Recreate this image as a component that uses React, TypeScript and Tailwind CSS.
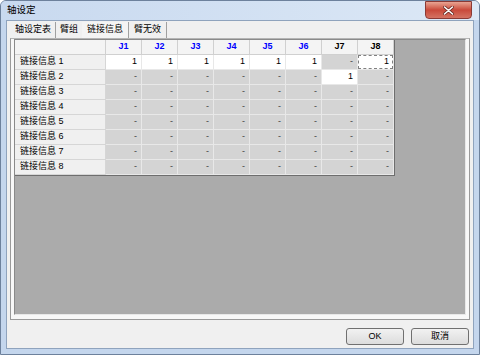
import React from "react";

const cols = ["J1", "J2", "J3", "J4", "J5", "J6", "J7", "J8"];

function cellVal(r: number, c: number): { v: string; white: boolean; focus?: boolean } {
  if (r === 0 && c < 6) return { v: "1", white: true };
  if (r === 0 && c === 7) return { v: "1", white: true, focus: true };
  if (r === 1 && c === 6) return { v: "1", white: true };
  return { v: "-", white: false };
}

export default function App() {
  const font = { fontFamily: "'Liberation Sans', 'Noto Sans CJK SC', sans-serif" };
  return (
    <div
      className="w-[480px] h-[355px] relative bg-[#c4d6ed] border border-[#6d819c] rounded-t-[6px] overflow-hidden flex flex-col text-[9px] text-black"
      style={font}
    >
      {/* title bar */}
      <div className="h-[19px] flex items-center pl-[6px] bg-gradient-to-r from-[#c8d9ef] to-[#dce8f6] text-[9.5px]">
        轴设定
      </div>
      <div className="absolute right-[7px] top-0 w-[47px] h-[18px] rounded-b-[4px] border border-[#8b3a35] bg-gradient-to-b from-[#e8a493] via-[#c9493a] to-[#d47262] flex items-center justify-center">
        <svg width="11" height="9" viewBox="0 0 11 9">
          <path d="M1.5 1 L9.5 8 M9.5 1 L1.5 8" stroke="#6b2a24" strokeWidth="3" strokeLinecap="round" />
          <path d="M1.5 1 L9.5 8 M9.5 1 L1.5 8" stroke="#ffffff" strokeWidth="1.6" strokeLinecap="round" />
        </svg>
      </div>

      {/* client */}
      <div className="mx-[5px] h-[329px] border border-[#8fa3bd] bg-[#f0f0f0] flex flex-col">
        {/* tabs */}
        <div className="h-[16px] mt-[1px] pl-[4px] flex items-stretch">
          <div className="px-[4px] flex items-center border-r border-[#a0a0a0]">轴设定表</div>
          <div className="px-[4px] flex items-center">臂组</div>
          <div className="px-[5px] flex items-center bg-[#f4f4f4] border-r border-[#a0a0a0]">链接信息</div>
          <div className="px-[5px] flex items-center border-r border-[#a0a0a0]">臂无效</div>
        </div>
        {/* panel */}
        <div className="mx-[3px] h-[282px] border border-[#9a9a9a] border-t-[#b4b4b4] bg-[#f8f8f8] px-[3px] pt-0 pb-[4px]">
          <div className="w-full h-full border border-[#8a8a8a] border-r-[#e8e8e8] border-b-[#e8e8e8] bg-[#ababab] flex flex-col items-start">
            <div className="flex flex-col border-r border-b border-[#6e6e6e]">
              {/* header */}
              <div className="flex h-[15px]">
                <div className="w-[91px] border-r border-b border-[#d0d0d0] bg-[#f4f4f4]" />
                {cols.map((c, i) => (
                  <div
                    key={c}
                    className={`w-[36px] border-r border-b border-[#d0d0d0] bg-[#f4f4f4] flex items-center justify-center font-bold text-[9px] ${
                      i < 6 ? "text-[#0000ff]" : "text-black"
                    }`}
                  >
                    {c}
                  </div>
                ))}
              </div>
              {Array.from({ length: 8 }).map((_, r) => (
                <div key={r} className="flex h-[15px]">
                  <div className="w-[91px] border-r border-b border-[#d6d6d6] bg-[#f0f0f0] flex items-center pl-[5px]">
                    链接信息 {r + 1}
                  </div>
                  {cols.map((c, ci) => {
                    const v = cellVal(r, ci);
                    return (
                      <div
                        key={c}
                        className={`w-[36px] border-r border-b border-[#e8e8e8] flex items-center justify-end pr-[4px] relative ${
                          v.white ? "bg-white" : "bg-[#d4d4d4]"
                        }`}
                      >
                        {v.focus && (
                          <div className="absolute inset-[0px] border border-dashed border-[#808080]" />
                        )}
                        <span className={v.v === "-" ? "text-[#404040]" : "text-black"}>{v.v}</span>
                      </div>
                    );
                  })}
                </div>
              ))}
            </div>
          </div>
        </div>
        {/* buttons */}
        <div className="flex justify-end gap-[7px] pr-[4px] mt-[8px]">
          <div className="w-[58px] h-[17px] border border-[#707070] rounded-[3px] bg-gradient-to-b from-[#f2f2f2] to-[#dcdcdc] flex items-center justify-center">
            OK
          </div>
          <div className="w-[58px] h-[17px] border border-[#707070] rounded-[3px] bg-gradient-to-b from-[#f2f2f2] to-[#dcdcdc] flex items-center justify-center">
            取消
          </div>
        </div>
      </div>
    </div>
  );
}
